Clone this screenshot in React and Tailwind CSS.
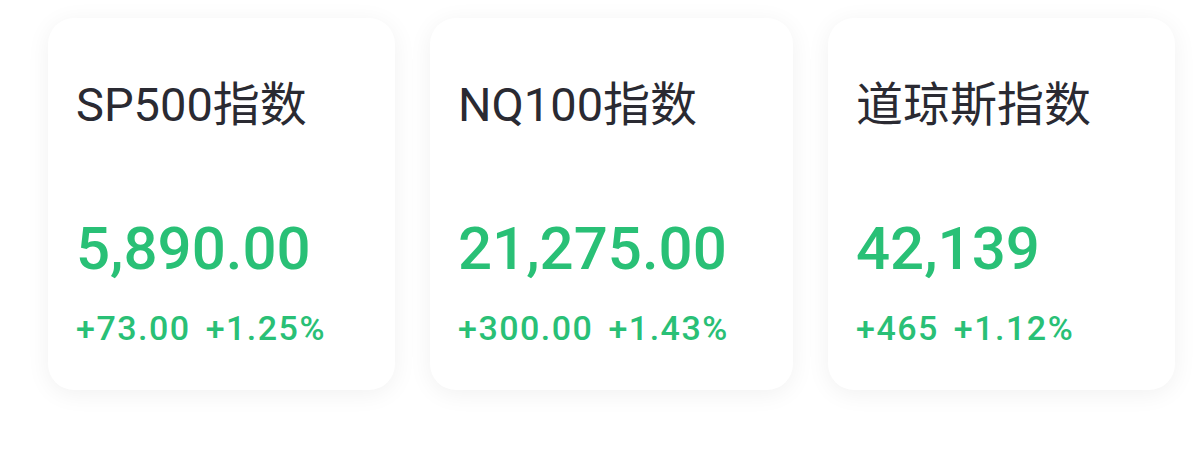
import React from 'react';

const cards = [
  { name: 'SP500指数', price: '5,890.00', change: '+73.00', pct: '+1.25%', w: 'w-[347px]' },
  { name: 'NQ100指数', price: '21,275.00', change: '+300.00', pct: '+1.43%', w: 'w-[363px]' },
  { name: '道琼斯指数', price: '42,139', change: '+465', pct: '+1.12%', w: 'w-[347px]' },
];

const IndexCard = ({ item }) => (
  <div
    className={`${item.w} h-[372px] shrink-0 rounded-[26px] bg-white shadow-[0_4px_24px_rgba(0,0,0,0.06)] pl-[28px] pt-[63px] flex flex-col`}
  >
    <div className="text-[47px] leading-none text-[#2a2a32] whitespace-nowrap">{item.name}</div>
    <div className="mt-[91px] text-[60px] leading-none font-medium text-[#29c076] whitespace-nowrap">
      {item.price}
    </div>
    <div className="mt-[32px] flex gap-[15px] text-[34px] leading-none font-medium tracking-[1.5px] text-[#29c076] whitespace-nowrap">
      <span>{item.change}</span>
      <span>{item.pct}</span>
    </div>
  </div>
);

export default function App() {
  return (
    <div
      className="w-[1200px] h-[453px] bg-white pl-[48px] pt-[18px] flex gap-[35px] overflow-hidden"
      style={{ fontFamily: 'Roboto, "Noto Sans CJK SC", sans-serif' }}
    >
      {cards.map((c) => (
        <IndexCard key={c.name} item={c} />
      ))}
    </div>
  );
}
